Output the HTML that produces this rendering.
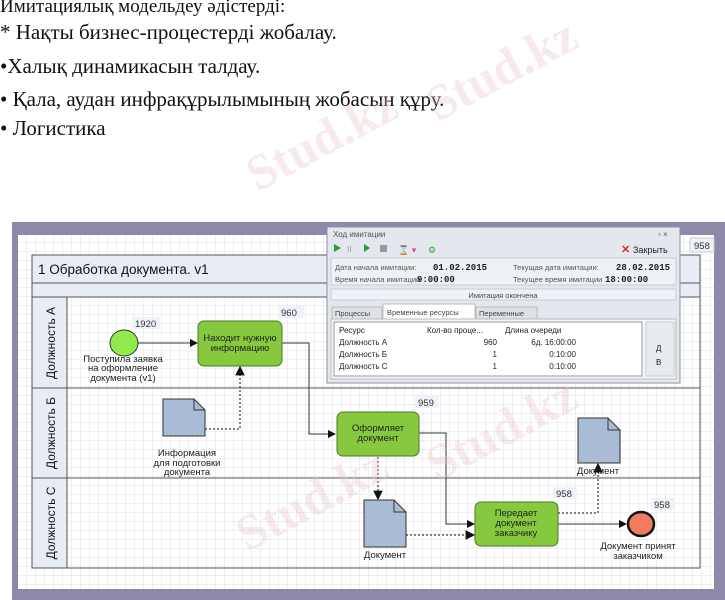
<!DOCTYPE html>
<html><head><meta charset="utf-8">
<style>
body{margin:0;width:725px;height:600px;background:#fff;overflow:hidden;position:relative;font-family:"Liberation Sans",sans-serif}
.t{position:absolute;left:0;font-family:"Liberation Serif",serif;font-size:21px;color:#111;white-space:nowrap}
.wm{position:absolute;font-family:"Liberation Serif",serif;font-weight:bold;font-size:50px;color:#ecc4c8;opacity:.35;transform:rotate(-28deg);white-space:nowrap}
</style></head><body>
<div class="t" style="top:-4px;font-size:19px">Имитациялық модельдеу әдістерді:</div>
<div class="t" style="top:20px">* Нақты бизнес-процестерді жобалау.</div>
<div class="t" style="top:54px">•Халық динамикасын талдау.</div>
<div class="t" style="top:87px">• Қала, аудан инфрақұрылымының жобасын құру.</div>
<div class="t" style="top:116px">• Логистика</div>

<svg style="position:absolute;left:0;top:0" width="725" height="600" font-family="Liberation Sans, sans-serif">
<defs>
<pattern id="g" width="9" height="9" patternUnits="userSpaceOnUse"><path d="M9 0V9H0" fill="none" stroke="#dde2ea" stroke-width="1"/></pattern>
<marker id="a" markerWidth="8" markerHeight="8" refX="7" refY="4" orient="auto"><path d="M0 0L8 4L0 8z" fill="#111"/></marker>
</defs>
<rect x="12" y="222" width="713" height="378" fill="#8c8aa8"/>
<rect x="18" y="235" width="696" height="354" fill="#fff"/>
<rect x="18" y="235" width="696" height="354" fill="url(#g)"/>
<rect x="32" y="255" width="668" height="28" fill="#e8ecf4" stroke="#555"/>
<text x="38" y="274" font-size="13.5" fill="#111">1 Обработка документа. v1</text>
<rect x="32" y="283" width="668" height="14" fill="#e8ecf4" stroke="#555"/>
<rect x="32" y="297" width="668" height="271" fill="none" stroke="#555"/>
<line x1="32" y1="388" x2="700" y2="388" stroke="#555"/>
<line x1="32" y1="478" x2="700" y2="478" stroke="#555"/>
<rect x="32" y="297" width="35" height="271" fill="#e8ecf4" stroke="#555"/>
<line x1="32" y1="388" x2="67" y2="388" stroke="#555"/>
<line x1="32" y1="478" x2="67" y2="478" stroke="#555"/>
<g font-size="12" fill="#111">
<text transform="translate(55,343) rotate(-90)" text-anchor="middle">Должность А</text>
<text transform="translate(55,433) rotate(-90)" text-anchor="middle">Должность Б</text>
<text transform="translate(55,523) rotate(-90)" text-anchor="middle">Должность С</text>
</g>
<g stroke="#333" fill="none" stroke-width="1">
<path d="M138 343H197" marker-end="url(#a)"/>
<path d="M282 343H309V434H335" marker-end="url(#a)"/>
<path d="M419 433H446V524H474" marker-end="url(#a)"/>
<path d="M558 524H626" marker-end="url(#a)"/>
</g>
<g stroke="#333" fill="none" stroke-width="1.2" stroke-dasharray="2 2">
<path d="M205 429H240V367" marker-end="url(#a)"/>
<path d="M378 457V499" marker-end="url(#a)"/>
<path d="M406 535H474" marker-end="url(#a)"/>
<path d="M558 513H598V464" marker-end="url(#a)"/>
</g>
<ellipse cx="124" cy="343" rx="14" ry="13" fill="#90ea4c" stroke="#333"/>
<ellipse cx="641" cy="524" rx="13" ry="12" fill="#f27a5e" stroke="#111" stroke-width="2.5"/>
<g fill="#86c83e" stroke="#4e7a22">
<rect x="198" y="321" width="84" height="45" rx="6"/>
<rect x="337" y="412" width="82" height="44" rx="6"/>
<rect x="475" y="502" width="83" height="44" rx="6"/>
</g>
<g font-size="9.5" fill="#222" text-anchor="middle">
<text x="240" y="341">Находит нужную</text><text x="240" y="351">информацию</text>
<text x="378" y="431">Оформляет</text><text x="378" y="441">документ</text>
<text x="516" y="516">Передает</text><text x="516" y="526">документ</text><text x="516" y="536">заказчику</text>
<text x="123" y="362">Поступила заявка</text><text x="123" y="371">на оформление</text><text x="123" y="381">документа (v1)</text>
<text x="187" y="456">Информация</text><text x="187" y="466">для подготовки</text><text x="187" y="475">документа</text>
<text x="598" y="474">Документ</text>
<text x="385" y="558">Документ</text>
<text x="638" y="549">Документ принят</text><text x="638" y="559">заказчиком</text>
</g>
<g fill="#aabbd6" stroke="#333">
<path d="M163 399H194L205 410V436H163Z"/><path d="M194 399V410H205" fill="none"/>
<path d="M578 418H608L620 430V463H578Z"/><path d="M608 418V430H620" fill="none"/>
<path d="M364 500H394L406 512V547H364Z"/><path d="M394 500V512H406" fill="none"/>
</g>
<g font-size="9.5" fill="#333">
<rect x="132" y="317" width="28" height="12" fill="#eef2fa"/><text x="135" y="327">1920</text>
<rect x="278" y="306" width="26" height="12" fill="#eef2fa"/><text x="281" y="316">960</text>
<rect x="415" y="396" width="24" height="12" fill="#eef2fa"/><text x="418" y="406">959</text>
<rect x="553" y="487" width="24" height="12" fill="#eef2fa"/><text x="556" y="497">958</text>
<rect x="651" y="498" width="24" height="12" fill="#eef2fa"/><text x="654" y="508">958</text>
<rect x="690" y="238" width="24" height="14" fill="#eef2fa" stroke="#ccc"/><text x="694" y="249">958</text>
</g>
<rect x="327" y="227" width="353" height="156" fill="#e4e8ee" stroke="#8a93a6"/>
<text x="333" y="237" font-size="8" fill="#555">Ход имитации</text>
<text x="658" y="237" font-size="8" fill="#555">▫ ×</text>
<g font-size="9">
<path d="M334 244l7 4-7 4z" fill="#2a9a3a"/>
<text x="347" y="252" fill="#999" font-size="8">II</text>
<path d="M364 244l6 4-6 4z" fill="#2a9a3a"/>
<rect x="380" y="245" width="7" height="7" fill="#999"/>
<text x="398" y="253" fill="#c57" font-size="9">⌛ ▾</text>
<text x="428" y="253" fill="#3a3" font-size="9">⚙</text>
<text x="621" y="253" fill="#e03020" font-size="11" font-weight="bold">✕</text>
<text x="633" y="253" fill="#222">Закрыть</text>
</g>
<rect x="331" y="258" width="345" height="27" fill="#eef1f5" stroke="#c8ccd4"/>
<g font-size="7.5" fill="#555">
<text x="335" y="270">Дата начала имитации:</text><text x="335" y="282">Время начала имитации</text>
<text x="513" y="270">Текущая дата имитации:</text><text x="513" y="282">Текущее время имитации</text>
</g>
<g font-size="9" font-weight="bold" fill="#222" font-family="Liberation Mono, monospace">
<text x="433" y="270">01.02.2015</text><text x="417" y="282">9:00:00</text>
<text x="616" y="270">28.02.2015</text><text x="605" y="282">18:00:00</text>
</g>
<rect x="331" y="289" width="345" height="11" fill="#eef1f5" stroke="#c8ccd4"/>
<text x="503" y="298" font-size="7.5" fill="#444" text-anchor="middle">Имитация окончена</text>
<rect x="332" y="307" width="50" height="12" fill="#dde1e8" stroke="#bbb"/>
<rect x="383" y="304" width="92" height="15" fill="#fff" stroke="#bbb"/>
<rect x="476" y="307" width="61" height="12" fill="#dde1e8" stroke="#bbb"/>
<g font-size="7.5" fill="#444"><text x="335" y="316">Процессы</text><text x="387" y="315">Временные ресурсы</text><text x="479" y="316">Переменные</text></g>
<rect x="331" y="319" width="345" height="60" fill="#f4f6f9" stroke="#bbb"/>
<rect x="334" y="322" width="308" height="54" fill="#fff" stroke="#999"/>
<rect x="646" y="322" width="28" height="54" fill="#e8ebf0" stroke="#ccc"/>
<g font-size="8" fill="#222">
<text x="339" y="333">Ресурс</text><text x="427" y="333">Кол-во проце...</text><text x="505" y="333">Длина очереди</text>
<text x="339" y="345">Должность А</text><text x="497" y="345" text-anchor="end">960</text><text x="576" y="345" text-anchor="end">6д. 16:00:00</text>
<text x="339" y="357">Должность Б</text><text x="497" y="357" text-anchor="end">1</text><text x="576" y="357" text-anchor="end">0:10:00</text>
<text x="339" y="369">Должность С</text><text x="497" y="369" text-anchor="end">1</text><text x="576" y="369" text-anchor="end">0:10:00</text>
<text x="656" y="351">Д</text><text x="656" y="365">В</text>
</g>
</svg>
<div class="wm" style="left:420px;top:40px">Stud.kz</div>
<div class="wm" style="left:240px;top:110px">Stud.kz</div>
<div class="wm" style="left:420px;top:400px">Stud.kz</div>
<div class="wm" style="left:230px;top:470px">Stud.kz</div>
</body></html>
